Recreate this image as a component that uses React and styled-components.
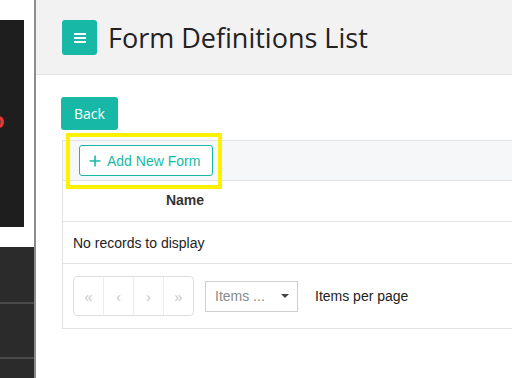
import styled, { createGlobalStyle } from 'styled-components'

const Global = createGlobalStyle`
  html, body { margin: 0; padding: 0; background: #fff; }
  body { font-family: "Liberation Sans", Arial, sans-serif; }
`

const teal = '#17b9a6'

const Page = styled.div`
  display: flex;
  height: 378px;
  width: 512px;
  overflow: hidden;
`

const Sidebar = styled.div`
  width: 34px;
  flex: none;
  display: flex;
  flex-direction: column;
  border-right: 2px solid #8c8c8c;
  background: #fff;
`

const DarkBox = styled.div`
  margin-top: 20px;
  width: 24px;
  height: 207px;
  background: #1e1e1e;
  overflow: hidden;
  display: flex;
  align-items: flex-start;
`

const RedGlyph = styled.span`
  margin-top: 84px;
  margin-left: -9px;
  color: #e53935;
  font: bold 22px "Open Sans", sans-serif;
`

const DarkPanel = styled.div`
  margin-top: 20px;
  flex: 1;
  background: #2b2b2b;
  display: flex;
  flex-direction: column;
`

const DarkRow = styled.div`
  height: ${p => p.h}px;
  border-bottom: 2px solid #4a4a4a;
  flex: none;
`

const Main = styled.div`
  flex: 1;
  overflow: hidden;
  display: flex;
  flex-direction: column;
`

const Header = styled.div`
  height: 75px;
  flex: none;
  background: #f2f2f2;
  border-bottom: 1px solid #e3e3e3;
  display: flex;
  align-items: center;
  padding-left: 26px;
  box-sizing: border-box;
`

const MenuButton = styled.div`
  width: 35px;
  height: 35px;
  border-radius: 3px;
  background: ${teal};
  display: flex;
  align-items: center;
  justify-content: center;
  margin-top: 1px;
`

const Title = styled.h1`
  margin: 0 0 0 11px;
  font: 400 27px "Open Sans", sans-serif;
  color: #222;
  white-space: nowrap;
`

const Content = styled.div`
  padding: 22px 0 0 25px;
`

const BackButton = styled.button`
  display: block;
  width: 57px;
  height: 33px;
  border: none;
  border-radius: 3px;
  background: ${teal};
  color: #fff;
  font: 400 14px "Open Sans", sans-serif;
  padding: 0;
`

const Grid = styled.div`
  position: relative;
  margin: 10px 0 0 1px;
  width: 520px;
  border: 1px solid #e3e3e3;
  border-right: none;
`

const Toolbar = styled.div`
  height: 40px;
  background: #f6f7f9;
  border-bottom: 1px solid #e0e0e0;
  padding: 4px 0 0 16px;
  box-sizing: border-box;
`

const AddButton = styled.button`
  height: 31px;
  width: 134px;
  border: 1px solid ${teal};
  border-radius: 3px;
  background: #fff;
  color: ${teal};
  font: 400 14px "Liberation Sans", Arial, sans-serif;
  display: flex;
  align-items: center;
  gap: 6px;
  padding: 0 0 0 9px;
`

const Highlight = styled.div`
  position: absolute;
  left: 3px;
  top: -8px;
  width: 156px;
  height: 56px;
  border: 4px solid #fff200;
  box-sizing: border-box;
  pointer-events: none;
`

const HeadRow = styled.div`
  height: 40px;
  border-bottom: 1px solid #e3e3e3;
  display: flex;
  align-items: center;
`

const HeadCell = styled.div`
  width: 244px;
  text-align: center;
  font: bold 14px "Liberation Sans", Arial, sans-serif;
  color: #333;
  margin-top: -2px;
`

const EmptyRow = styled.div`
  height: 41px;
  border-bottom: 1px solid #e3e3e3;
  display: flex;
  align-items: center;
  padding-left: 10px;
  font-size: 14px;
  color: #222;
`

const Pager = styled.div`
  height: 64px;
  display: flex;
  align-items: center;
  padding-left: 10px;
`

const PagerGroup = styled.div`
  display: flex;
  height: 40px;
  border: 1px solid #dedede;
  border-radius: 4px;
  box-sizing: border-box;
`

const PagerButton = styled.div`
  width: 29px;
  display: flex;
  align-items: center;
  justify-content: center;
  color: #c8c8c8;
  font-size: 15px;
  border-left: ${p => (p.first ? 'none' : '1px solid #ececec')};
`

const Select = styled.div`
  margin-left: 11px;
  width: 93px;
  height: 31px;
  border: 1px solid #cfcfcf;
  box-sizing: border-box;
  display: flex;
  align-items: center;
  padding: 0 8px 0 9px;
  color: #8a8a8a;
  font-size: 14px;
  justify-content: space-between;
`

const Caret = styled.span`
  width: 0;
  height: 0;
  border-left: 4px solid transparent;
  border-right: 4px solid transparent;
  border-top: 4px solid #444;
`

const PagerLabel = styled.span`
  margin-left: 17px;
  font-size: 14px;
  color: #222;
  margin-top: -1px;
`

const MenuIcon = () => (
  <svg width="12" height="10" viewBox="0 0 12 10">
    <rect x="0" y="0" width="12" height="2" fill="#fff" />
    <rect x="0" y="4" width="12" height="2" fill="#fff" />
    <rect x="0" y="8" width="12" height="2" fill="#fff" />
  </svg>
)

const PlusIcon = () => (
  <svg width="12" height="12" viewBox="0 0 12 12">
    <path d="M6 0.5v11M0.5 6h11" stroke={teal} strokeWidth="1.6" />
  </svg>
)

const App = () => {
  return (
    <Page>
      <Global />
      <Sidebar>
        <DarkBox>
          <RedGlyph>o</RedGlyph>
        </DarkBox>
        <DarkPanel>
          <DarkRow h={55} />
          <DarkRow h={53} />
        </DarkPanel>
      </Sidebar>
      <Main>
        <Header>
          <MenuButton>
            <MenuIcon />
          </MenuButton>
          <Title>Form Definitions List</Title>
        </Header>
        <Content>
          <BackButton>Back</BackButton>
          <Grid>
            <Toolbar>
              <AddButton>
                <PlusIcon />
                Add New Form
              </AddButton>
            </Toolbar>
            <Highlight />
            <HeadRow>
              <HeadCell>Name</HeadCell>
            </HeadRow>
            <EmptyRow>No records to display</EmptyRow>
            <Pager>
              <PagerGroup>
                <PagerButton first>«</PagerButton>
                <PagerButton>‹</PagerButton>
                <PagerButton>›</PagerButton>
                <PagerButton>»</PagerButton>
              </PagerGroup>
              <Select>
                Items ...
                <Caret />
              </Select>
              <PagerLabel>Items per page</PagerLabel>
            </Pager>
          </Grid>
        </Content>
      </Main>
    </Page>
  )
}

export default App
